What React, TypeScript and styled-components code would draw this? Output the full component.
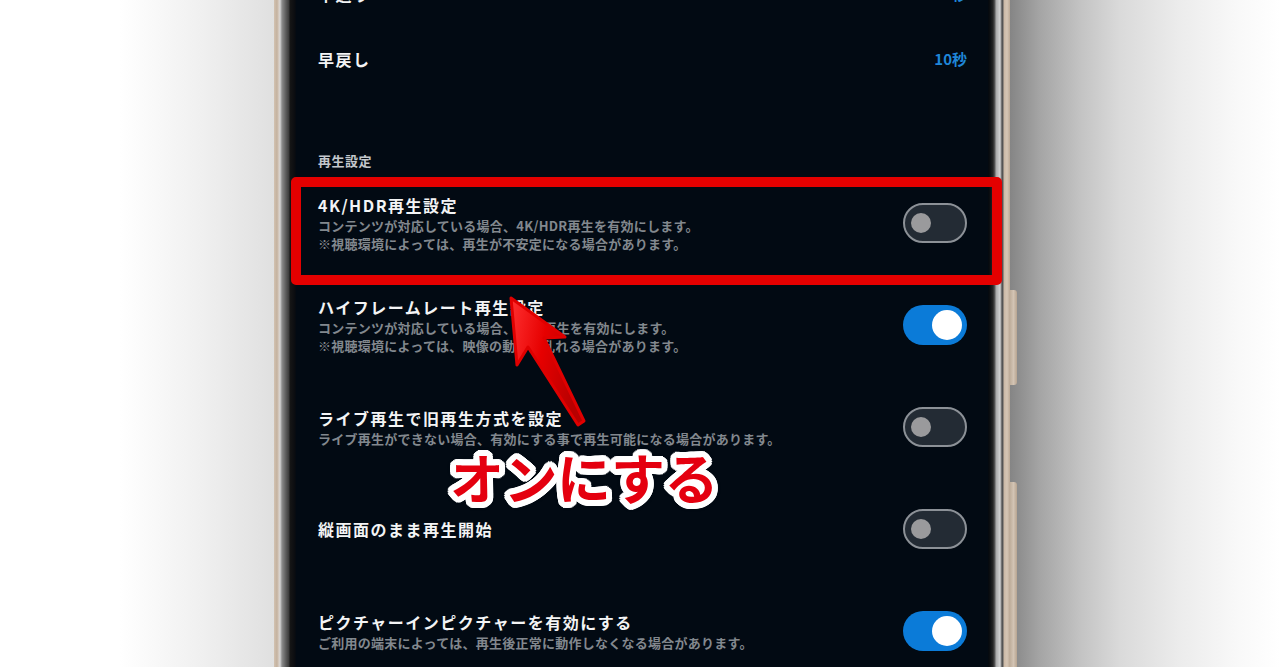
import React from "react";
import styled, { createGlobalStyle } from "styled-components";

const Global = createGlobalStyle`
  html, body { margin: 0; padding: 0; background: #fff; }
  body { font-family: "Noto Sans CJK JP", "Noto Sans", sans-serif; }
`;

const outline = (() => {
  const parts: string[] = [];
  [6, 4, 2].forEach((r) => {
    for (let i = 0; i < 24; i++) {
      const a = (i / 24) * Math.PI * 2;
      parts.push(`${(Math.cos(a) * r).toFixed(2)}px ${(Math.sin(a) * r).toFixed(2)}px 0 #fff`);
    }
  });
  parts.push("0 0 9px rgba(0,0,0,0.35)");
  return parts.join(", ");
})();

const Page = styled.div`
  position: relative;
  display: flex;
  width: 1280px;
  height: 667px;
  overflow: hidden;
`;

const LeftBg = styled.div`
  width: 274px;
  flex: none;
  background: linear-gradient(to right, #ffffff 0, #ffffff 120px, #f0f0f0 200px, #e0e0e0 274px);
`;

const RightBg = styled.div`
  flex: 1;
  background: linear-gradient(
    to right,
    #858585 0,
    #a5a5a5 30px,
    #c3c3c3 70px,
    #dadada 110px,
    #ececec 170px,
    #f9f9f9 230px,
    #ffffff 270px
  );
`;

const Frame = styled.div`
  position: relative;
  display: flex;
  width: 736px;
  flex: none;
`;

const LeftBezel = styled.div`
  width: 22px;
  flex: none;
  background: linear-gradient(
    to right,
    #d2c2b1 0,
    #c4b29f 3px,
    #d9cfc6 5px,
    #d6d6d6 6px,
    #8a8a8a 8px,
    #5a5a5a 12px,
    #3a3a3a 15px,
    #161616 16px,
    #0a0c10 21px,
    #040a12 22px
  );
`;

const RightBezel = styled.div`
  width: 22px;
  flex: none;
  background: linear-gradient(
    to right,
    #03080e 0,
    #0c0f12 2px,
    #262626 5px,
    #5e5e5e 7px,
    #a8a8a8 8px,
    #d2d2d2 12px,
    #9a9a9a 13px,
    #4e4e4e 14px,
    #5a5a5a 15px,
    #cbb8a5 16px,
    #d6c6b5 19px,
    #bba894 22px
  );
`;

const SideButton = styled.div<{ $top: number; $height: number }>`
  position: absolute;
  right: -7px;
  top: ${(p) => p.$top}px;
  width: 7px;
  height: ${(p) => p.$height}px;
  border-radius: 0 3px 3px 0;
  background: linear-gradient(to right, #bfae9b, #d3c4b4 50%, #b8a591);
`;

const Screen = styled.div`
  flex: 1;
  background: #020a13;
  overflow: hidden;
`;

const List = styled.div`
  margin-top: -39px;
  display: flex;
  flex-direction: column;
`;

const ValueRow = styled.div`
  display: flex;
  align-items: center;
  justify-content: space-between;
  height: 65px;
  padding: 0 21px 0 22px;
`;

const Title = styled.div`
  font-size: 16px;
  line-height: 24px;
  font-weight: 700;
  letter-spacing: 1.5px;
  color: #f3f4f5;
  white-space: nowrap;
`;

const Value = styled.div`
  font-size: 15px;
  font-weight: 700;
  color: #1f86d8;
`;

const SectionHeader = styled.div`
  margin-top: 61px;
  padding: 0 22px 2px;
  font-size: 13px;
  line-height: 18px;
  font-weight: 700;
  letter-spacing: 0.5px;
  color: #c3c7cc;
`;

const Row = styled.div`
  display: flex;
  align-items: center;
  height: 102px;
  padding: 0 21px 0 22px;
  gap: 16px;
`;

const TextCol = styled.div`
  flex: 1;
  min-width: 0;
`;

const Desc = styled.div`
  font-size: 13px;
  line-height: 18px;
  font-weight: 700;
  letter-spacing: 0.25px;
  color: #82888e;
  white-space: nowrap;
`;

const Toggle = styled.div<{ $on: boolean }>`
  position: relative;
  flex: none;
  box-sizing: border-box;
  width: 64px;
  height: 40px;
  border-radius: 20px;
  background: ${(p) => (p.$on ? "#0b7bd8" : "#232b34")};
  border: ${(p) => (p.$on ? "none" : "2px solid #8c9197")};
  display: flex;
  align-items: center;
  justify-content: ${(p) => (p.$on ? "flex-end" : "flex-start")};
  padding: ${(p) => (p.$on ? "0 5px" : "0 6px")};
`;

const Knob = styled.div<{ $on: boolean }>`
  width: ${(p) => (p.$on ? 30 : 20)}px;
  height: ${(p) => (p.$on ? 30 : 20)}px;
  border-radius: 50%;
  background: ${(p) => (p.$on ? "#ffffff" : "#9a9a9c")};
`;

const Highlight = styled.div`
  position: absolute;
  left: 291px;
  top: 177px;
  width: 711px;
  height: 108px;
  box-sizing: border-box;
  border: 10px solid #e40000;
  border-radius: 5px;
  pointer-events: none;
`;

const ArrowSvg = styled.svg`
  position: absolute;
  left: 0;
  top: 0;
  pointer-events: none;
`;

const Callout = styled.div`
  position: absolute;
  left: 450px;
  top: 441px;
  font-family: "Noto Sans CJK JP", sans-serif;
  font-size: 54px;
  line-height: 72px;
  font-weight: 700;
  color: #e4000f;
  letter-spacing: -0.5px;
  white-space: nowrap;
  text-shadow: ${outline};
`;

type Setting = { title: string; desc: string[]; on: boolean };

const settings: Setting[] = [
  {
    title: "4K/HDR再生設定",
    desc: [
      "コンテンツが対応している場合、4K/HDR再生を有効にします。",
      "※視聴環境によっては、再生が不安定になる場合があります。",
    ],
    on: false,
  },
  {
    title: "ハイフレームレート再生設定",
    desc: [
      "コンテンツが対応している場合、HFR再生を有効にします。",
      "※視聴環境によっては、映像の動きが乱れる場合があります。",
    ],
    on: true,
  },
  {
    title: "ライブ再生で旧再生方式を設定",
    desc: ["ライブ再生ができない場合、有効にする事で再生可能になる場合があります。"],
    on: false,
  },
  { title: "縦画面のまま再生開始", desc: [], on: false },
  {
    title: "ピクチャーインピクチャーを有効にする",
    desc: ["ご利用の端末によっては、再生後正常に動作しなくなる場合があります。"],
    on: true,
  },
];

export default function App() {
  return (
    <>
      <Global />
      <Page>
        <LeftBg />
        <Frame>
          <LeftBezel />
          <Screen>
            <List>
              <ValueRow>
                <Title>早送り</Title>
                <Value>10秒</Value>
              </ValueRow>
              <ValueRow>
                <Title>早戻し</Title>
                <Value>10秒</Value>
              </ValueRow>
              <SectionHeader>再生設定</SectionHeader>
              {settings.map((s) => (
                <Row key={s.title}>
                  <TextCol>
                    <Title>{s.title}</Title>
                    {s.desc.map((d) => (
                      <Desc key={d}>{d}</Desc>
                    ))}
                  </TextCol>
                  <Toggle $on={s.on}>
                    <Knob $on={s.on} />
                  </Toggle>
                </Row>
              ))}
            </List>
          </Screen>
          <RightBezel />
          <SideButton $top={290} $height={95} />
          <SideButton $top={482} $height={200} />
        </Frame>
        <RightBg />
        <Highlight />
        <ArrowSvg width="1280" height="667" viewBox="0 0 1280 667">
          <defs>
            <linearGradient id="arrowFill" x1="0" y1="0" x2="1" y2="0.3">
              <stop offset="0" stopColor="#ff3030" />
              <stop offset="0.5" stopColor="#e60000" />
              <stop offset="1" stopColor="#b80000" />
            </linearGradient>
          </defs>
          <polygon
            points="511,298 565,337 544,338 584,421 578,425 528,347 517,365"
            fill="url(#arrowFill)"
            stroke="#e00000"
            strokeWidth="3"
            strokeLinejoin="round"
          />
        </ArrowSvg>
        <Callout>オンにする</Callout>
      </Page>
    </>
  );
}
